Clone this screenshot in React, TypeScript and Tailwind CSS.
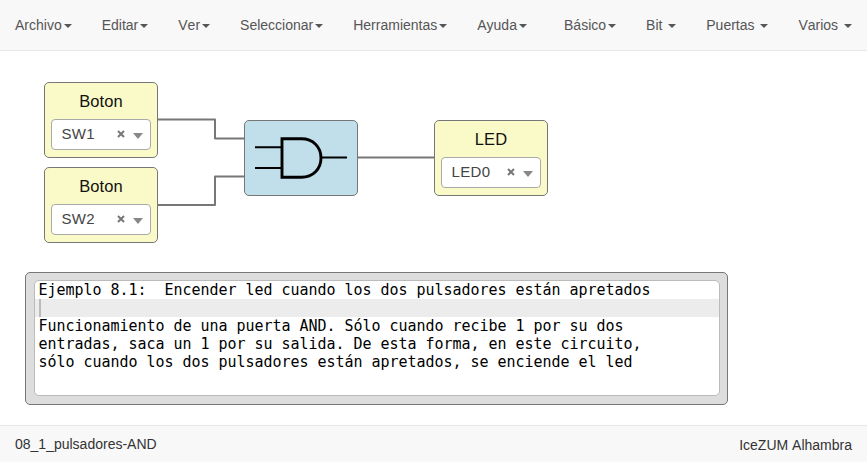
import React from "react";

type MenuItem = { label: string; spaced?: boolean };

const leftMenus: MenuItem[] = [
  { label: "Archivo" },
  { label: "Editar" },
  { label: "Ver" },
  { label: "Seleccionar" },
  { label: "Herramientas" },
  { label: "Ayuda" },
];

const rightMenus: MenuItem[] = [
  { label: "Básico" },
  { label: "Bit", spaced: true },
  { label: "Puertas", spaced: true },
  { label: "Varios", spaced: true },
];

const noteLines = [
  "Ejemplo 8.1:  Encender led cuando los dos pulsadores están apretados",
  "",
  "Funcionamiento de una puerta AND. Sólo cuando recibe 1 por su dos",
  "entradas, saca un 1 por su salida. De esta forma, en este circuito,",
  "sólo cuando los dos pulsadores están apretados, se enciende el led",
];

function Menu({ items }: { items: MenuItem[] }) {
  return (
    <ul className="flex">
      {items.map((item) => (
        <li key={item.label} className="px-[15px] leading-5 whitespace-pre">
          {item.label}
          {item.spaced ? " " : ""}
          <span className="ml-[2px] inline-block border-x-4 border-t-4 border-x-transparent border-t-[#555] align-middle" />
        </li>
      ))}
    </ul>
  );
}

function IoBlock({ title, value, place }: { title: string; value: string; place: string }) {
  return (
    <div
      className={`absolute h-[76px] w-[114px] rounded-[5px] border border-[#777] bg-[#fafac8] px-[6px] ${place}`}
    >
      <div className="h-9 text-center text-[16.5px] leading-[37px] tracking-[0.1px] text-[#111]">{title}</div>
      <div className="flex h-[31px] items-center rounded-[4px] border border-[#aaa] bg-white pr-[7px] pl-[9.5px]">
        <span className="pb-[2px] text-[15px] leading-7 tracking-[0.35px] text-[#444]">{value}</span>
        <svg className="mb-px ml-auto h-[8px] w-[8px]" viewBox="0 0 8 8">
          <path d="M1 1 7 7M7 1 1 7" stroke="#777" strokeWidth="2" />
        </svg>
        <svg className="mt-[2px] ml-[8px] h-[6px] w-[10px]" viewBox="0 0 10 6">
          <path d="M0 0h10L5 6z" fill="#888" />
        </svg>
      </div>
    </div>
  );
}

export default function App() {
  return (
    <div className="flex h-[462px] w-[867px] flex-col overflow-hidden bg-white font-['Liberation_Sans',Arial,sans-serif] text-[14px] [font-kerning:none]">
      <nav className="flex h-[51px] shrink-0 items-center justify-between border-b border-[#e7e7e7] bg-[#f8f8f8] text-[#555]">
        <Menu items={leftMenus} />
        <Menu items={rightMenus} />
      </nav>

      <main className="relative flex-1">
        <svg className="absolute top-0 left-0" width="867" height="220" fill="none">
          <g stroke="#777" strokeWidth="2" strokeLinejoin="round">
            <path d="M158 68.5H215V87.5H245" />
            <path d="M158 154H215V125.5H245" />
            <path d="M357 106.5H435" />
          </g>
        </svg>

        <IoBlock title="Boton" value="SW1" place="left-[44px] top-[31px]" />
        <IoBlock title="Boton" value="SW2" place="left-[44px] top-[116px]" />
        <IoBlock title="LED" value="LED0" place="left-[434px] top-[69px]" />

        <div className="absolute top-[69px] left-[244px] h-[76px] w-[114px] rounded-[5px] border border-[#777] bg-[#c0dfeb]">
          <svg width="112" height="74" viewBox="245 121 112 74" fill="none" stroke="#000">
            <path d="M255 147.3H282M255 168H282M321 157.5H347" strokeWidth="2" />
            <path d="M282 138.8H301.5C313 138.8 321 147 321 158S313 177.2 301.5 177.2H282Z" strokeWidth="2.9" />
          </svg>
        </div>

        <div className="absolute top-[221px] left-[25px] h-[133px] w-[703px] rounded-[5px] border border-[#777] bg-[#ddd] py-[7px] pr-[7px] pl-2">
          <div className="h-[116px] overflow-hidden rounded-[5px] border border-[#bbb] bg-white font-['DejaVu_Sans_Mono',monospace] text-[15px] text-black">
            {noteLines.map((line, i) =>
              line ? (
                <div
                  key={i}
                  className="h-[18px] origin-[50%_80%] scale-y-[1.1] pl-[3.5px] leading-[19px] tracking-[-0.03px] whitespace-pre"
                >
                  {line}
                </div>
              ) : (
                <div key={i} className="h-[18px] bg-[#ececec] pl-[4px]">
                  <div className="h-full w-[2px] bg-[#bbb]" />
                </div>
              ),
            )}
          </div>
        </div>
      </main>

      <footer className="flex h-[37px] shrink-0 justify-between border-t border-[#e7e7e7] bg-[#f8f8f8] px-[15px] text-[#333]">
        <span className="pt-2 leading-5">08_1_pulsadores-AND</span>
        <span className="pt-[9px] leading-5">IceZUM Alhambra</span>
      </footer>
    </div>
  );
}
